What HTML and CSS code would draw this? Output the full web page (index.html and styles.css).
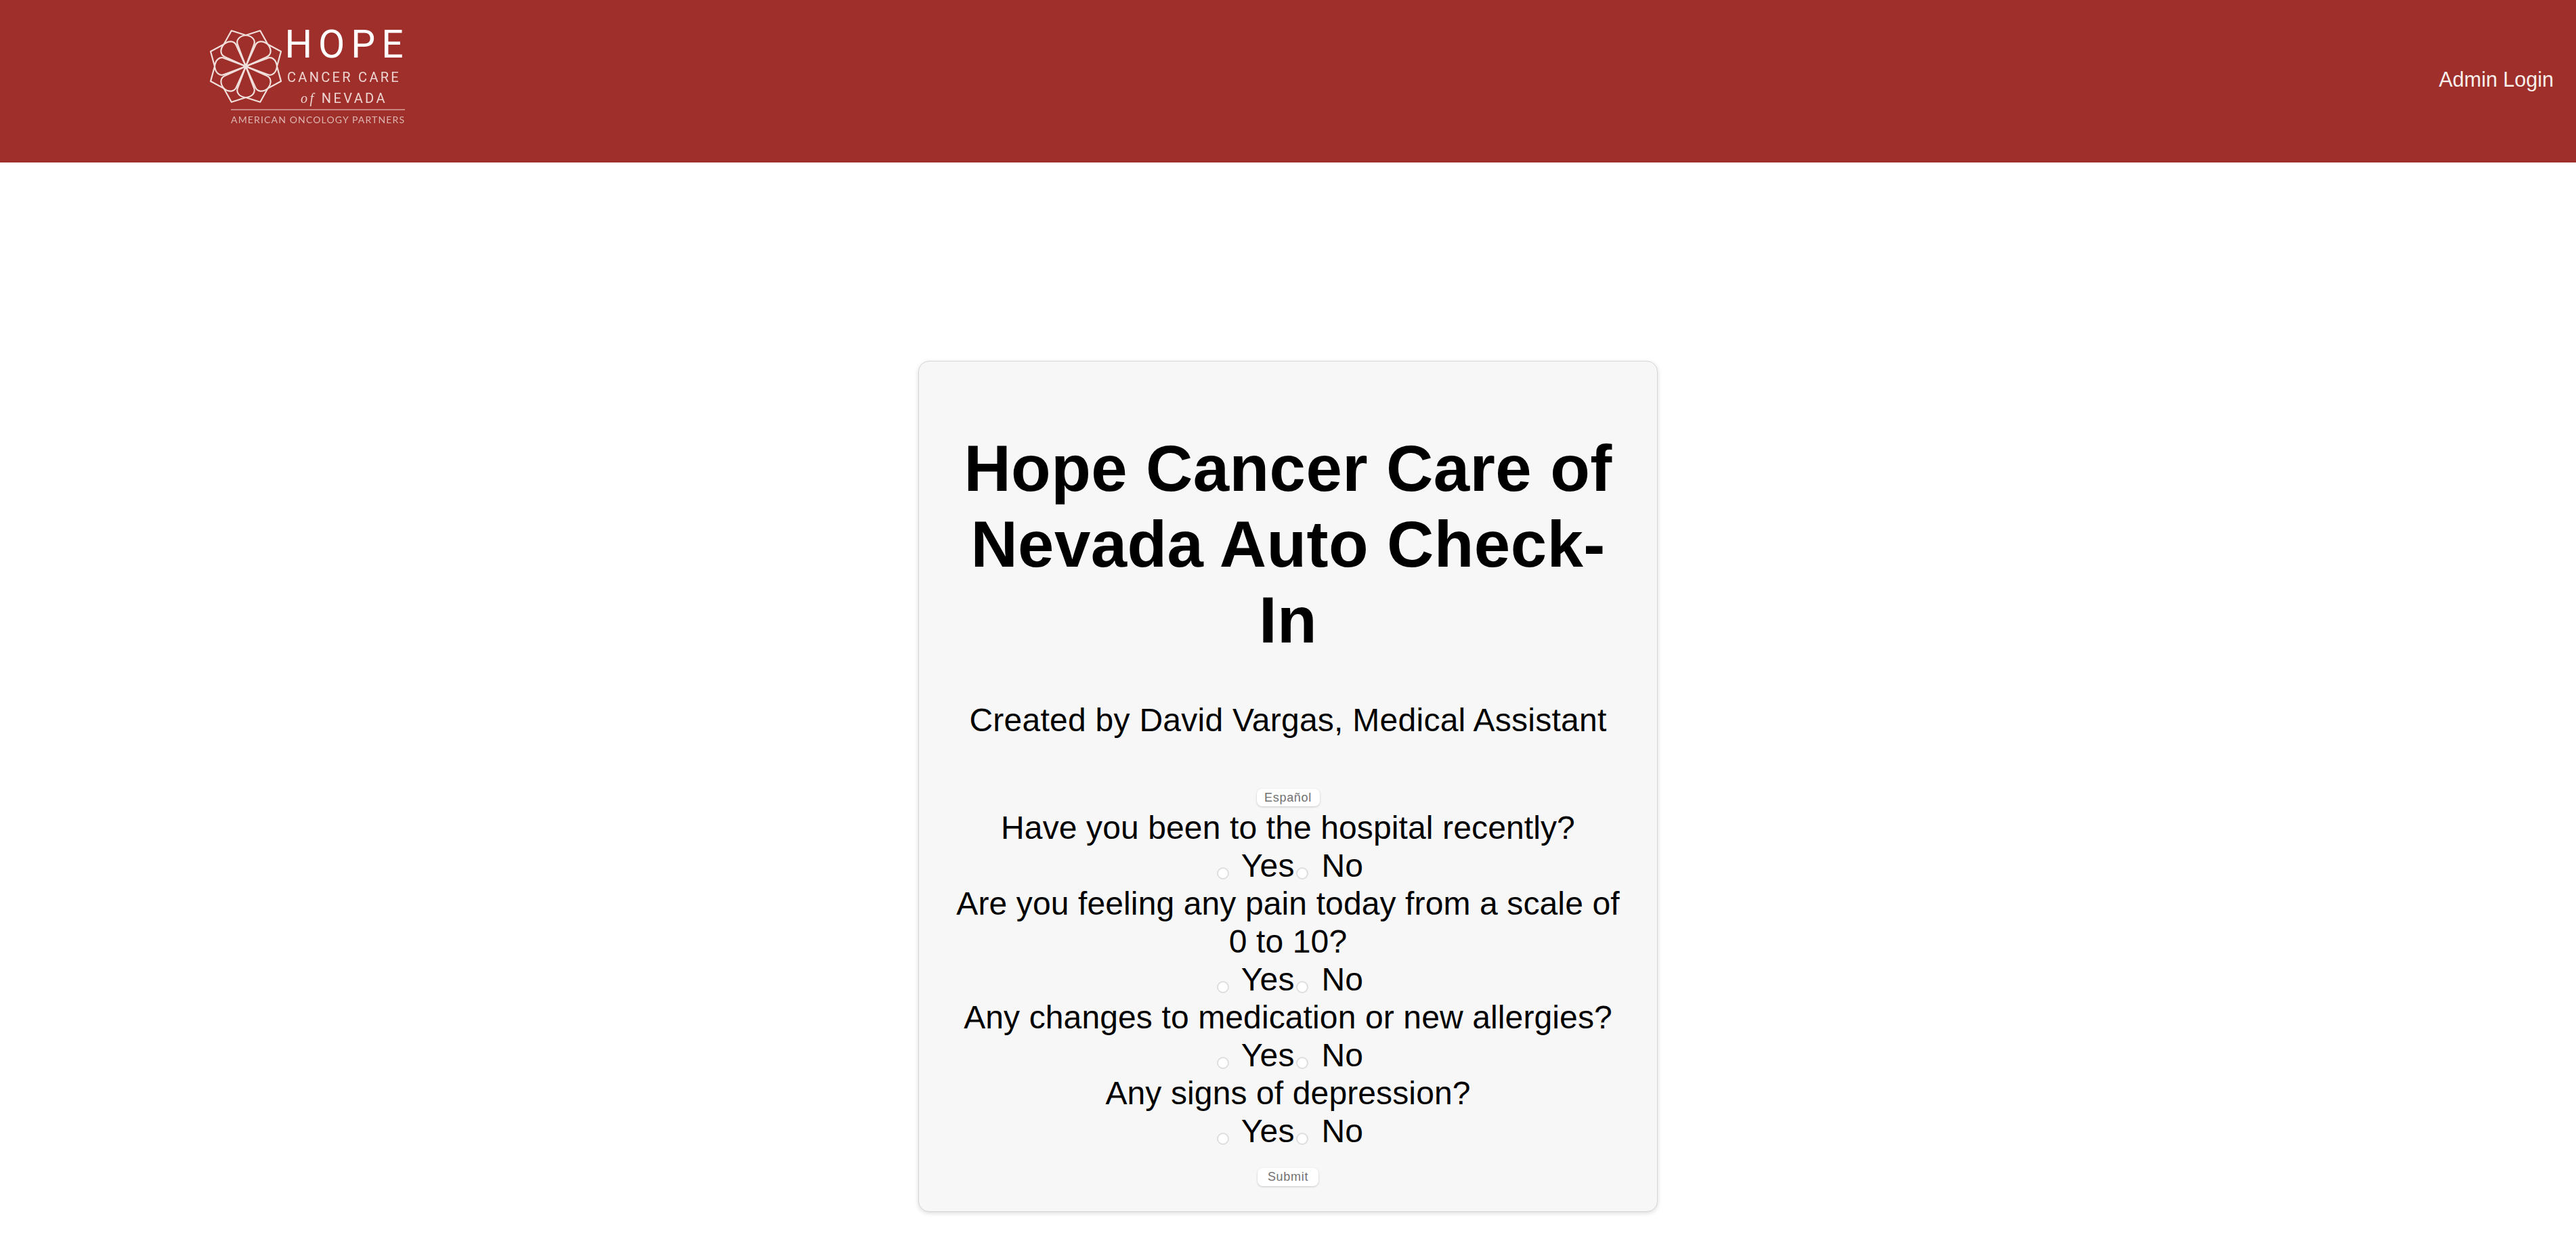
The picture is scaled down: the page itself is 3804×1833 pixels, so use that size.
FILE: index.html
```html
<!DOCTYPE html>
<html lang="en">
<head>
    <meta charset="UTF-8">
    <meta name="viewport" content="width=device-width, initial-scale=1.0">
    <title>Hope Cancer Care of Nevada Auto Check-In</title>
    <link rel="stylesheet" href="styles.css">
</head>
<body>
    <header class="topbar">
        <div class="logo">
            <div class="logo-main">
                <svg class="logo-mark" viewBox="-55 -55 110 110" aria-hidden="true">
                    <defs>
                        <path id="petal" d="M0 0 L-11.6 -30.8 C-15.5 -39 -9 -45 0 -46 C9 -45 15.5 -39 11.6 -30.8 Z"/>
                    </defs>
                    <polygon points="0,-46 21.2,-52.7 32.5,-32.5 52,-22 46,0 52,22 32.5,32.5 21.2,52.7 0,46 -21.2,52.7 -32.5,32.5 -52,22 -46,0 -52,-22 -32.5,-32.5 -21.2,-52.7"/>
                    <use href="#petal"/>
                    <use href="#petal" transform="rotate(45)"/>
                    <use href="#petal" transform="rotate(90)"/>
                    <use href="#petal" transform="rotate(135)"/>
                    <use href="#petal" transform="rotate(180)"/>
                    <use href="#petal" transform="rotate(225)"/>
                    <use href="#petal" transform="rotate(270)"/>
                    <use href="#petal" transform="rotate(315)"/>
                </svg>
                <div class="logo-name">
                    <div class="logo-hope">HOPE</div>
                    <div class="logo-care">CANCER CARE</div>
                    <div class="logo-nevada"><em>of</em> NEVADA</div>
                </div>
            </div>
            <div class="logo-partner">AMERICAN ONCOLOGY PARTNERS</div>
        </div>
        <a class="admin-link" href="#">Admin Login</a>
    </header>

    <main class="page">
        <section class="card">
            <h1>Hope Cancer Care of Nevada Auto Check-In</h1>
            <p class="credit">Created by David Vargas, Medical Assistant</p>

            <button type="button" class="small-btn lang-btn">Español</button>

            <form id="checkinForm">
                <div class="question">Have you been to the hospital recently?</div>
                <div class="answers">
                    <input type="radio" name="hospital" id="hospitalYes"><label for="hospitalYes">Yes</label><input type="radio" name="hospital" id="hospitalNo"><label for="hospitalNo">No</label>
                </div>

                <div class="question">Are you feeling any pain today from a scale of 0 to 10?</div>
                <div class="answers">
                    <input type="radio" name="pain" id="painYes"><label for="painYes">Yes</label><input type="radio" name="pain" id="painNo"><label for="painNo">No</label>
                </div>

                <div class="question">Any changes to medication or new allergies?</div>
                <div class="answers">
                    <input type="radio" name="medication" id="medicationYes"><label for="medicationYes">Yes</label><input type="radio" name="medication" id="medicationNo"><label for="medicationNo">No</label>
                </div>

                <div class="question">Any signs of depression?</div>
                <div class="answers">
                    <input type="radio" name="depression" id="depressionYes"><label for="depressionYes">Yes</label><input type="radio" name="depression" id="depressionNo"><label for="depressionNo">No</label>
                </div>

                <button type="submit" class="small-btn submit-btn">Submit</button>
            </form>
        </section>
    </main>
</body>
</html>
```

FILE: styles.css
```css
* {
    box-sizing: border-box;
}

body {
    margin: 0;
    font-family: "Liberation Sans", Arial, sans-serif;
    color: #000;
    background: #fff;
}

/* header */
.topbar {
    height: 240px;
    padding: 0 32px 0 308px;
    display: flex;
    align-items: flex-start;
    justify-content: space-between;
    background: #9e2f2a;
}

.logo {
    margin-top: 43px;
    width: 290px;
    color: #f6e9e7;
    filter: blur(0.5px);
}

.logo-main {
    display: flex;
    align-items: flex-start;
}

.logo-mark {
    width: 110px;
    height: 110px;
    flex-shrink: 0;
    fill: none;
    stroke: #f1dfdc;
    stroke-width: 2.2;
    stroke-linejoin: round;
}

.logo-name {
    width: 186px;
    font-family: Roboto, "Liberation Sans", sans-serif;
    text-align: center;
    white-space: nowrap;
}

.logo-hope {
    font-size: 57px;
    line-height: 46px;
    font-weight: 400;
    letter-spacing: 9px;
    margin-right: -9px;
    color: #fff;
}

.logo-care {
    margin-top: 14px;
    font-size: 20px;
    line-height: 22px;
    letter-spacing: 3.3px;
    color: #eed5d2;
}

.logo-nevada {
    margin-top: 8px;
    font-size: 20px;
    line-height: 24px;
    letter-spacing: 3.4px;
    color: #eed5d2;
}

.logo-nevada em {
    font-family: "Liberation Serif", serif;
}

.logo-partner {
    margin: 4px 0 0 33px;
    padding-top: 7px;
    border-top: 2px solid #c98680;
    font-family: Lato, "Liberation Sans", sans-serif;
    font-size: 14px;
    line-height: 14px;
    letter-spacing: 1.15px;
    white-space: nowrap;
    color: #dfb6b2;
}

.admin-link {
    margin-top: 99px;
    margin-right: 1px;
    font-size: 30.5px;
    line-height: 37px;
    color: #f8eeec;
    text-decoration: none;
}

/* check-in card */
.page {
    display: flex;
    justify-content: center;
    padding: 293px 0 43px;
}

.card {
    width: 1092px;
    padding: 40px 48px 37px;
    text-align: center;
    background: #f7f7f7;
    border: 1px solid #d6d6d6;
    border-radius: 16px;
    box-shadow: 0 2px 6px rgba(0, 0, 0, 0.14);
}

h1 {
    margin: 62px 0 0;
    font-size: 96px;
    line-height: 112px;
    font-weight: 700;
    letter-spacing: 0.4px;
}

.credit {
    margin: 64px 0 74px;
    font-size: 48px;
    line-height: 55px;
    letter-spacing: 0.26px;
}

.small-btn {
    display: block;
    margin: 0 auto;
    padding: 0;
    font-family: "Liberation Sans", Arial, sans-serif;
    font-size: 18px;
    letter-spacing: 0.7px;
    color: #707070;
    background: #fff;
    border: none;
    border-radius: 8px;
    box-shadow: 0 1px 3px rgba(0, 0, 0, 0.2);
    cursor: pointer;
}

.lang-btn {
    width: 93px;
    height: 26px;
    margin-bottom: 4px;
}

.submit-btn {
    width: 90px;
    height: 27px;
    margin-top: 26px;
}

.question,
.answers {
    font-size: 48px;
    line-height: 56px;
    letter-spacing: 0.12px;
}

.answers input {
    appearance: none;
    width: 18px;
    height: 18px;
    margin: 0 18px 0 6px;
    vertical-align: -4px;
    background: #fff;
    border: 2px solid #dedede;
    border-radius: 50%;
}

.answers label + input {
    margin: 0 20px 0 2px;
}
```
